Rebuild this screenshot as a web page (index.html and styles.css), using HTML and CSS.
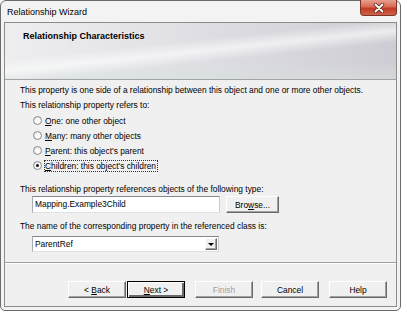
FILE: index.html
```html
<!DOCTYPE html>
<html lang="en">
<head>
    <meta charset="UTF-8">
    <title>Relationship Wizard</title>
    <link rel="stylesheet" href="styles.css">
</head>
<body>
    <div class="window">
        <div class="titlebar">
            <span class="title">Relationship Wizard</span>
            <div class="close-btn">
                <svg width="14" height="10" viewBox="0 0 14 10">
                    <path d="M3.5 1.5 L10.5 8.5 M10.5 1.5 L3.5 8.5" stroke="#5a2a22" stroke-width="3.4" stroke-linecap="round"/>
                    <path d="M3.5 1.5 L10.5 8.5 M10.5 1.5 L3.5 8.5" stroke="#fff" stroke-width="1.8" stroke-linecap="round"/>
                </svg>
            </div>
        </div>
        <div class="client">
            <div class="header">
                <h2>Relationship Characteristics</h2>
            </div>
            <div class="content">
                <p class="intro">This property is one side of a relationship between this object and one or more other objects.</p>
                <p class="label">This relationship property refers to:</p>
                <div class="radio-group">
                    <label class="radio-row"><span class="radio"></span><span><u>O</u>ne: one other object</span></label>
                    <label class="radio-row"><span class="radio"></span><span><u>M</u>any: many other objects</span></label>
                    <label class="radio-row"><span class="radio"></span><span><u>P</u>arent: this object's parent</span></label>
                    <label class="radio-row"><span class="radio checked"></span><span class="focus"><u>C</u>hildren: this object's children</span></label>
                </div>
                <p class="label type-label">This relationship property references objects of the following type:</p>
                <div class="field-row">
                    <div class="textbox">Mapping.Example3Child</div>
                    <div class="button browse"><span>Bro<u>w</u>se...</span></div>
                </div>
                <p class="label name-label">The name of the corresponding property in the referenced class is:</p>
                <div class="field-row">
                    <div class="combo">
                        <span>ParentRef</span>
                        <span class="combo-arrow"></span>
                    </div>
                </div>
            </div>
            <div class="footer">
                <div class="button back"><span>&lt; <u>B</u>ack</span></div>
                <div class="button default next"><span><u>N</u>ext &gt;</span></div>
                <div class="button disabled finish"><span>Finish</span></div>
                <div class="button cancel"><span>Cancel</span></div>
                <div class="button"><span>Help</span></div>
            </div>
        </div>
    </div>
</body>
</html>
```

FILE: styles.css
```css
* {
    box-sizing: border-box;
}
body {
    margin: 0;
    background-color: #fff;
    font-family: "Liberation Sans", Arial, sans-serif;
    font-size: 8.4px;
    color: #000;
}
.window {
    width: 401px;
    height: 311px;
    border: 1px solid #6b6b6b;
    border-radius: 6px 6px 5px 5px;
    background-color: #f3f3f3;
    padding: 0 3px 3px 3px;
    display: flex;
    flex-direction: column;
}
.titlebar {
    height: 21px;
    display: flex;
    align-items: flex-start;
}
.title {
    font-size: 9px;
    padding: 6px 0 0 3px;
}
.close-btn {
    margin-left: auto;
    margin-top: -1px;
    width: 37px;
    height: 16px;
    border: 1px solid #7d3326;
    border-top: none;
    border-radius: 0 0 4px 4px;
    background: linear-gradient(#e9a090 0%, #d86a55 45%, #c23a22 55%, #d0604a 100%);
    display: flex;
    align-items: center;
    justify-content: center;
}
.client {
    flex: 1;
    border: 1px solid #8c8c8c;
    background-color: #f0f0f0;
    display: flex;
    flex-direction: column;
}
.header {
    height: 57px;
    border-bottom: 1px solid #a3a3a3;
    padding: 8px 0 0 18px;
    background:
        linear-gradient(174deg, rgba(255,255,255,0) 38%, rgba(255,255,255,0.6) 50%, rgba(255,255,255,0) 62%),
        linear-gradient(180deg, rgba(255,255,255,0) 70%, rgba(214,224,222,0.6) 100%),
        linear-gradient(90deg, #eeeef0 0%, #e2e1e6 40%, #cfcdd4 100%);
}
.header h2 {
    margin: 0;
    font-size: 9px;
    line-height: 11px;
    font-weight: bold;
}
.content {
    flex: 1;
    padding: 0 15px;
}
.content p {
    margin: 0;
    line-height: 11px;
}
.intro {
    padding-top: 5px;
}
.label {
    margin-top: 4px !important;
}
.radio-group {
    margin-top: 2px;
    padding-left: 13px;
}
.radio-row {
    height: 15px;
    display: flex;
    align-items: center;
}
.radio {
    width: 9px;
    height: 9px;
    border: 1px solid #8a8b8c;
    border-radius: 50%;
    background: radial-gradient(circle at 60% 60%, #fff 20%, #d8d8d8 100%);
    margin-right: 3px;
    display: flex;
    align-items: center;
    justify-content: center;
}
.radio.checked::after {
    content: "";
    width: 3px;
    height: 3px;
    border-radius: 50%;
    background-color: #111;
}
.focus {
    outline: 1px dotted #333;
    outline-offset: 0;
    padding-right: 1px;
}
.type-label {
    margin-top: 11px !important;
}
.name-label {
    margin-top: 8px !important;
}
.field-row {
    display: flex;
    margin-top: 1px;
    padding-left: 12px;
}
.name-label + .field-row {
    margin-top: 4px;
}
.textbox {
    width: 188px;
    height: 17px;
    background-color: #fff;
    border: 1px solid;
    border-color: #828790 #c9ccd3 #dfe1e6 #a8adb5;
    padding: 2px 0 0 2px;
}
.combo {
    width: 187px;
    height: 16px;
    background-color: #fff;
    border: 1px solid;
    border-color: #828790 #c9ccd3 #dfe1e6 #a8adb5;
    display: flex;
    align-items: center;
    padding: 0 1px 0 2px;
}
.combo span:first-child {
    flex: 1;
}
.combo-arrow {
    width: 12px;
    height: 12px;
    border: 1px solid;
    border-color: #fff #696969 #696969 #fff;
    box-shadow: inset -1px -1px #a0a0a0;
    background-color: #f0f0f0;
    display: flex;
    align-items: center;
    justify-content: center;
}
.combo-arrow::after {
    content: "";
    border-left: 3px solid transparent;
    border-right: 3px solid transparent;
    border-top: 3px solid #000;
    margin-top: 1px;
}
.button {
    width: 58px;
    height: 17px;
    border: 1px solid;
    border-color: #fff #696969 #696969 #fff;
    box-shadow: inset -1px -1px #a0a0a0;
    background-color: #f0f0f0;
    display: flex;
    align-items: center;
    justify-content: center;
}
.browse {
    width: 53px;
    margin-left: 6px;
}
.footer {
    height: 44px;
    border-top: 1px solid #a0a0a0;
    box-shadow: inset 0 1px #fff;
    display: flex;
    justify-content: flex-end;
    padding: 18px 9px 0 0;
}
.button.default {
    border: 1px solid #000;
    box-shadow: inset 1px 1px #fff, inset -2px -2px #696969;
}
.back {
    margin-right: 1px;
}
.next {
    margin-right: 10px;
}
.finish {
    margin-right: 8px;
}
.cancel {
    margin-right: 10px;
}
.disabled {
    color: #a0a0a0;
}
```
